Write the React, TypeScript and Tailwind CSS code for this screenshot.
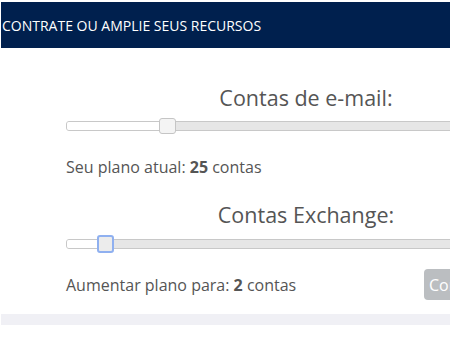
import React from 'react';

const font = { fontFamily: '"Open Sans", "Noto Sans", sans-serif' };

type SliderProps = { pos: number; focused?: boolean };

// Simple static range slider look-alike
const Slider: React.FC<SliderProps> = ({ pos, focused }) => (
  <div className="relative h-[16px] flex items-center">
    <div className="w-full h-[10px] rounded-[3px] border border-[#c8c8c8] bg-[#e6e6e6] overflow-hidden flex">
      <div className="h-full bg-white" style={{ width: `${pos}px` }}></div>
    </div>
    <div
      className={
        focused
          ? 'absolute top-[-1px] w-[17px] h-[18px] rounded-[3px] border-2 border-[#8fb0f0] bg-[#ececec]'
          : 'absolute top-0 w-[17px] h-[16px] rounded-[3px] border border-[#c5c5c5] bg-[#f4f4f4]'
      }
      style={{ left: `${pos}px` }}
    ></div>
  </div>
);

const App: React.FC = () => {
  return (
    <div className="w-[450px] h-[337px] overflow-hidden bg-white pt-[2px] pl-[1px]" style={font}>
      <div className="h-[46px] bg-[#00204e] flex items-center pl-[1px]">
        <span className="text-white text-[14px]">CONTRATE OU AMPLIE SEUS RECURSOS</span>
      </div>

      <div className="ml-[65px] w-[480px] text-[#555]">
        <h2 className="text-center text-[21.5px] leading-[26px] mt-[37px]">Contas de e-mail:</h2>
        <div className="mt-[7px]">
          <Slider pos={93} />
        </div>
        <p className="text-[16px] leading-[20px] mt-[23px]">
          Seu plano atual: <b>25</b> contas
        </p>

        <h2 className="text-center text-[21.5px] leading-[26px] mt-[25px]">Contas Exchange:</h2>
        <div className="mt-[8px]">
          <Slider pos={31} focused />
        </div>
        <div className="flex items-center justify-between mt-[17px]">
          <p className="text-[16px] leading-[20px]">
            Aumentar plano para: <b>2</b> contas
          </p>
          <button className="mr-[-2px] w-[124px] h-[31px] rounded-[4px] bg-[#bbbec1] text-white text-[16px] text-left pl-[5px]">
            Contratar
          </button>
        </div>
      </div>

      <div className="h-[11px] bg-[#f0f0f5] mt-[14px]"></div>
    </div>
  );
};

export default App;
